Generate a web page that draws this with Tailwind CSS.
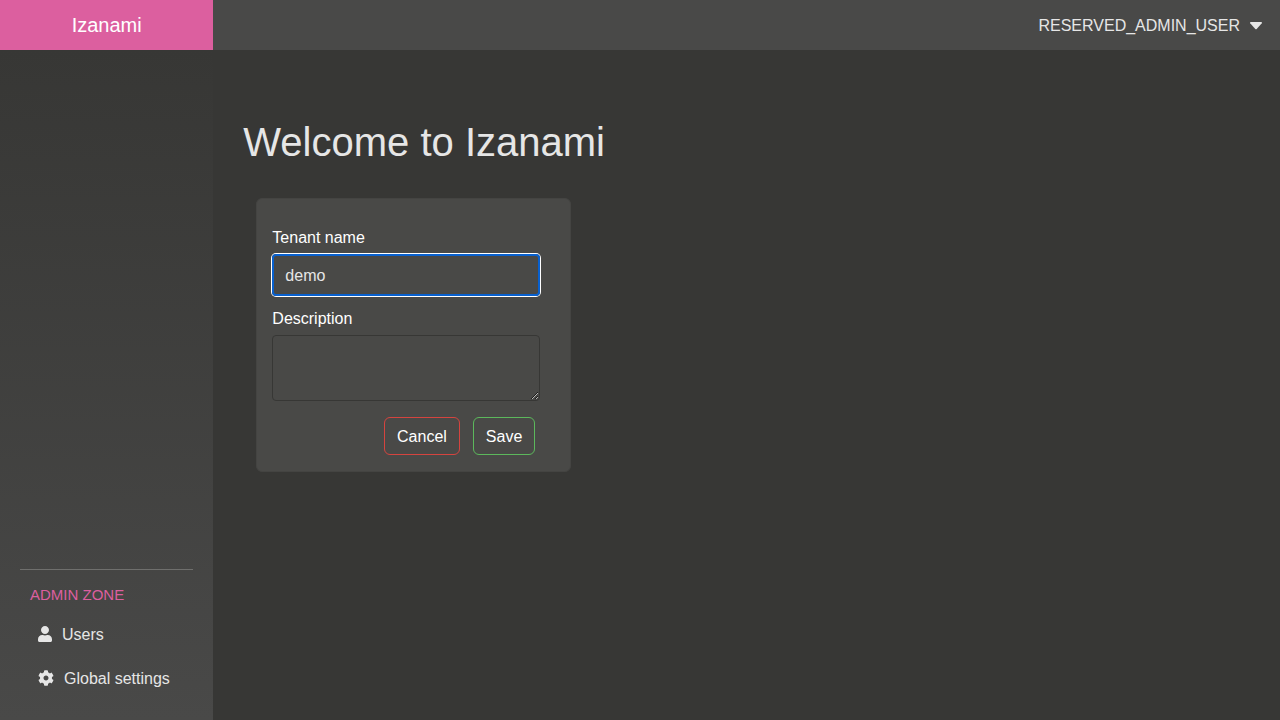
<!DOCTYPE html>
<html lang="en">
<head>
<meta charset="utf-8">
<meta name="viewport" content="width=device-width, initial-scale=1">
<title>Izanami</title>
<script src="https://cdn.jsdelivr.net/npm/@tailwindcss/browser@4"></script>
</head>
<body class="flex min-h-screen flex-col bg-[#373735] font-['Liberation_Sans',Arial,sans-serif] text-base text-[#e6e6e6]">
<header class="flex h-[50px] bg-[#494948]">
  <a href="#" class="flex w-1/6 items-center justify-center bg-[#dc5f9f] text-xl text-white">Izanami</a>
  <div class="flex flex-1 items-center justify-end pr-[18px]">
    <button type="button" class="flex items-center gap-[10px] pt-px">RESERVED_ADMIN_USER
      <svg class="h-2 w-3" viewBox="0 0 12 8" fill="currentColor" aria-hidden="true"><path d="M.8 0h10.400c.7 0 1 .8.6 1.300L6.700 6.900a1 1 0 0 1-1.400 0L.2 1.300C-.2.8.1 0 .8 0z"/></svg>
    </button>
  </div>
</header>
<div class="flex flex-1">
  <aside class="flex w-1/6 flex-col justify-end bg-linear-to-b from-[#373735] to-[#494948] px-5 pb-5">
    <div class="border-t border-[#6f6f6d] px-[10px] pt-[13px]">
      <h2 class="text-[15px] leading-6 text-[#dc5f9f]">ADMIN ZONE</h2>
      <nav class="mt-[5px] px-2">
        <a href="#" class="flex h-11 items-center gap-[10px]">
          <svg class="h-4 w-[14px] shrink-0" viewBox="0 0 448 512" fill="currentColor" aria-hidden="true"><path d="M224 256c70.700 0 128-57.300 128-128S294.700 0 224 0 96 57.300 96 128s57.300 128 128 128zm89.600 32h-16.700c-22.200 10.200-46.900 16-72.900 16s-50.600-5.800-72.900-16h-16.700C60.200 288 0 348.200 0 422.400V464c0 26.500 21.500 48 48 48h352c26.500 0 48-21.500 48-48v-41.600c0-74.200-60.200-134.400-134.400-134.400z"/></svg>
          <span class="pt-0.5">Users</span></a>
        <a href="#" class="flex h-11 items-center gap-[10px] whitespace-nowrap">
          <svg class="size-4 shrink-0" viewBox="0 0 512 512" fill="currentColor" aria-hidden="true"><path d="M487.400 315.700l-42.600-24.600c4.300-23.200 4.300-47 0-70.200l42.600-24.600c4.900-2.800 7.100-8.600 5.500-14-11.100-35.600-30-67.800-54.700-94.600-3.800-4.100-10-5.100-14.800-2.300L380.800 110c-17.900-15.400-38.500-27.300-60.800-35.100V25.800c0-5.600-3.900-10.500-9.400-11.700-36.700-8.200-74.300-7.800-109.200 0-5.500 1.200-9.400 6.100-9.400 11.700V75c-22.200 7.900-42.800 19.800-60.800 35.100L88.700 85.500c-4.900-2.800-11-1.900-14.800 2.300-24.700 26.700-43.600 58.900-54.700 94.600-1.700 5.400.6 11.200 5.500 14L67.300 221c-4.300 23.200-4.300 47 0 70.200l-42.600 24.600c-4.900 2.800-7.100 8.600-5.500 14 11.100 35.600 30 67.800 54.700 94.600 3.800 4.100 10 5.100 14.800 2.300l42.600-24.600c17.900 15.400 38.500 27.300 60.800 35.100v49.200c0 5.600 3.900 10.500 9.400 11.700 36.700 8.200 74.300 7.800 109.200 0 5.500-1.200 9.400-6.100 9.400-11.700v-49.200c22.200-7.900 42.800-19.800 60.800-35.100l42.600 24.600c4.900 2.800 11 1.900 14.800-2.300 24.700-26.700 43.600-58.900 54.700-94.600 1.500-5.500-.7-11.300-5.600-14.100zM256 336c-44.100 0-80-35.900-80-80s35.900-80 80-80 80 35.900 80 80-35.900 80-80 80z"/></svg>
          <span class="pt-0.5">Global settings</span></a>
      </nav>
    </div>
  </aside>
  <main class="flex-1 px-[30px] pt-[68px]">
    <h1 class="text-[40px] leading-[48px]">Welcome to Izanami</h1>
    <form class="mt-8 ml-[13px] w-[315px] max-w-full rounded-md border border-[#444442] bg-[#494947] pt-[27px] pr-[30px] pb-4 pl-[15px]">
      <label for="tenant" class="block text-white">Tenant name</label>
      <input id="tenant" type="text" value="demo" class="mt-1 block h-[42px] w-full rounded-sm border-2 border-[#0860ce] px-[11px] pt-0.5 shadow-[0_0_0_1px_#fff] outline-none">
      <label for="description" class="mt-[11px] block text-white">Description</label>
      <textarea id="description" class="mt-1 block h-[66px] w-full rounded-sm border border-[#373735] px-3 py-2"></textarea>
      <div class="mt-4 mr-[5px] flex justify-end gap-[13px] text-white">
        <button type="button" class="h-[38px] rounded-md border border-[#d5443f] px-3 pt-0.5">Cancel</button>
        <button type="submit" class="h-[38px] rounded-md border border-[#5cb85c] px-3 pt-0.5">Save</button>
      </div>
    </form>
  </main>
</div>
</body>
</html>
